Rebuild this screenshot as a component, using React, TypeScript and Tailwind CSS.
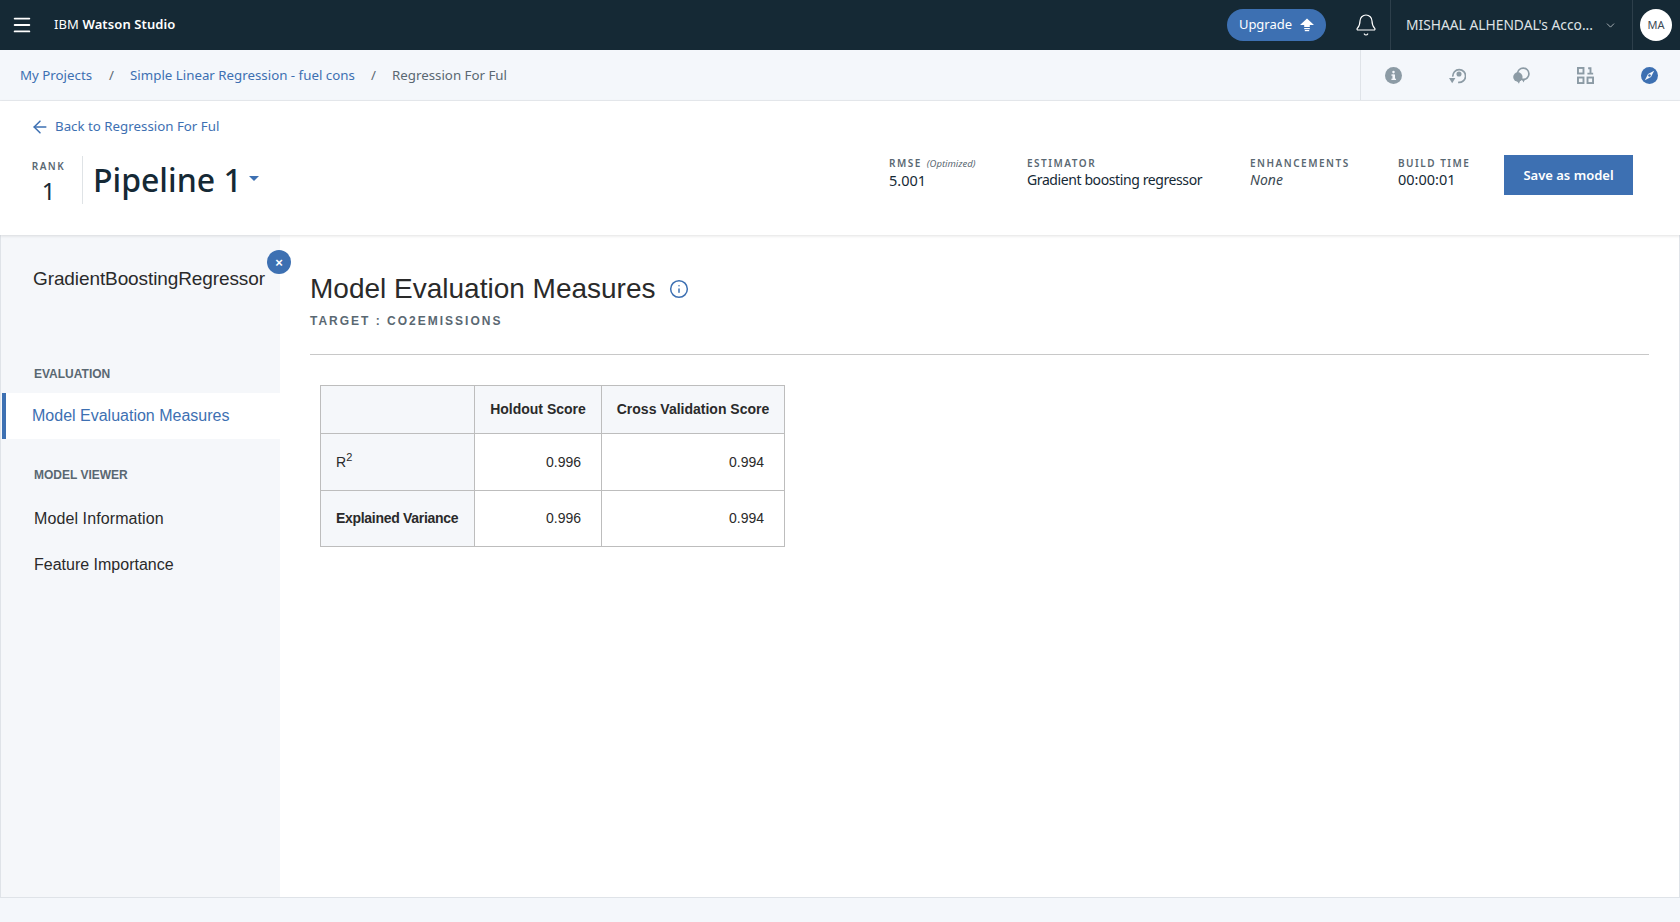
import { ArrowLeft, Bell, ChevronDown, Info, Menu } from "lucide-react";

const plex = "font-['Noto_Sans',sans-serif]";
const helv = "font-['Liberation_Sans',Arial,sans-serif]";

const labelCls = "text-[10px] leading-[14px] font-semibold tracking-[1.500px] text-[#5a6872]";

function ToolIcons() {
  return (
    <div className="flex h-full w-[320px] items-center justify-between border-l border-[#dfe3e8] pl-[24px] pr-[22px]">
      <svg width="17" height="17" viewBox="0 0 16 16">
        <circle cx="8" cy="8" r="8" fill="#8c9ba5" />
        <rect x="7" y="7" width="2.4" height="5" fill="#f4f7fb" />
        <rect x="6" y="7" width="2" height="1.2" fill="#f4f7fb" />
        <rect x="6" y="11" width="4.4" height="1.2" fill="#f4f7fb" />
        <circle cx="8" cy="4.8" r="1.2" fill="#f4f7fb" />
      </svg>
      <svg width="17" height="17" viewBox="0 0 16 16" fill="none">
        <path d="M3.600 9a6 6 0 1 1 5 5.400" stroke="#8c9ba5" strokeWidth="1.600" />
        <circle cx="9.400" cy="6.600" r="2.400" fill="#8c9ba5" />
        <path d="M0 10.400h6l-3 5z" fill="#8c9ba5" />
      </svg>
      <svg width="17" height="17" viewBox="0 0 16 16" fill="none">
        <circle cx="9.600" cy="6.400" r="5.400" stroke="#8c9ba5" strokeWidth="1.600" />
        <circle cx="4.600" cy="9.400" r="4.400" fill="#8c9ba5" />
        <path d="M3 12h4l-1.400 3.800zM8 11h3.400l-1.400 3.600z" fill="#8c9ba5" />
      </svg>
      <svg width="17" height="17" viewBox="0 0 16 16" fill="none" stroke="#8c9ba5" strokeWidth="1.800">
        <rect x="0.900" y="0.900" width="5.200" height="5.200" />
        <rect x="0.900" y="9.900" width="5.200" height="5.200" />
        <rect x="9.900" y="9.900" width="5.200" height="5.200" />
        <path d="M10.500 1.200h2.200v5M9.800 6.200h5.400" />
      </svg>
      <svg width="17" height="17" viewBox="0 0 16 16">
        <circle cx="8" cy="8" r="8" fill="#3d70b2" />
        <path d="M12.400 3.600 9.400 9.400 3.600 12.400 6.600 6.600z" fill="#f4f7fb" />
        <circle cx="8" cy="8" r="1.200" fill="#3d70b2" />
      </svg>
    </div>
  );
}

export default function App() {
  return (
    <div className={`flex h-[922px] w-[1680px] flex-col overflow-hidden bg-[#f4f7fb] ${plex}`}>
      <header className="flex h-[50px] shrink-0 items-center bg-[#152935] text-white">
        <Menu className="ml-[11px] h-[22px] w-[22px]" strokeWidth={2} />
        <div className="ml-[21px] text-[13px] tracking-[0.1px]">
          IBM <span className="font-semibold">Watson Studio</span>
        </div>
        <div className="ml-auto flex h-[32px] w-[99px] items-center justify-center gap-[8px] rounded-full bg-[#3d70b2] text-[13px]">
          Upgrade
          <svg width="14" height="14" viewBox="0 0 14 14" fill="#fff">
            <path d="M7 0.500 14 7H9.800V9H4.200V7H0z" />
            <rect x="4.200" y="10" width="5.600" height="1.200" />
            <rect x="4.800" y="12" width="4.400" height="1.200" />
          </svg>
        </div>
        <div className="flex w-[64px] justify-end pr-[12px]">
          <Bell className="h-[24px] w-[24px]" strokeWidth={1.200} />
        </div>
        <div className="flex h-full w-[242px] items-center border-l border-[#2d3f4b] pl-[15px] text-[13.800px] text-[#dfe3e6]">
          MISHAAL ALHENDAL's Acco...
          <ChevronDown className="ml-[11px] h-[13px] w-[13px]" strokeWidth={1.300} />
        </div>
        <div className="flex h-full w-[48px] items-center justify-center border-l border-[#2d3f4b] pr-[1px]">
          <div className="flex h-[32px] w-[32px] items-center justify-center rounded-full bg-white text-[11px] text-[#3d4a54]">
            MA
          </div>
        </div>
      </header>

      <nav className="flex h-[51px] shrink-0 items-center justify-between border-b border-[#e8ebef] text-[13.300px]">
        <div className="flex items-center pl-[20px] pt-[1px]">
          <span className="text-[#3d70b2]">My Projects</span>
          <span className="ml-[17px] mr-[16px] text-[#5a6872]">/</span>
          <span className="w-[225px] overflow-hidden whitespace-nowrap text-[#3d70b2]">
            Simple Linear Regression - fuel cons
          </span>
          <span className="mx-[16px] text-[#5a6872]">/</span>
          <span className="text-[#5a6872]">Regression For Ful</span>
        </div>
        <ToolIcons />
      </nav>

      <section className="relative z-10 flex h-[134px] shrink-0 bg-white pl-[32px] pr-[47px] shadow-[0_1px_3px_rgba(0,0,0,0.12)]">
        <div className="flex flex-col">
          <div className="-ml-[2px] mt-[16px] flex items-center gap-[5px] text-[13.300px] text-[#3d70b2]">
            <ArrowLeft className="h-[20px] w-[20px]" strokeWidth={1.800} />
            Back to Regression For Ful
          </div>
          <div className="mt-[19px] flex">
            <div className="flex w-[50px] flex-col items-center pr-[17px] pt-[3px]">
              <span className={labelCls}>RANK</span>
              <span className="mt-[4px] text-[24px] leading-[28px] text-[#152935]">1</span>
            </div>
            <div className="flex h-[48px] items-center border-l border-[#dfe3e6] pl-[10px]">
              <span className="text-[32px] font-medium text-[#152935]">Pipeline 1</span>
              <span className="mb-[3px] ml-[7px] h-0 w-0 border-x-[5px] border-t-[5px] border-x-transparent border-t-[#3d70b2]" />
            </div>
          </div>
        </div>
        <div className="ml-auto flex pt-[55px]">
          <div className="w-[138px] pl-[1px]">
            <div className="flex items-baseline gap-[5px]">
              <span className={labelCls}>RMSE</span>
              <span className="text-[9.500px] italic text-[#5a6872]">(Optimized)</span>
            </div>
            <div className="-mt-[1px] text-[14.500px] leading-[20px] text-[#152935]">5.001</div>
          </div>
          <div className="w-[223px] pl-[1px]">
            <div className={labelCls}>ESTIMATOR</div>
            <div className="text-[14px] leading-[20px] tracking-[-0.400px] text-[#152935]">
              Gradient boosting regressor
            </div>
          </div>
          <div className="w-[148px] pl-[1px]">
            <div className={labelCls}>ENHANCEMENTS</div>
            <div className="text-[14px] italic leading-[20px] text-[#3d4a54]">None</div>
          </div>
          <div className="w-[107px] pl-[1px]">
            <div className={labelCls}>BUILD TIME</div>
            <div className="-mt-[1px] text-[14.500px] leading-[20px] text-[#152935]">00:00:01</div>
          </div>
          <div className="-mt-[1px] flex h-[40px] w-[129px] items-center justify-center bg-[#3d70b2] pt-[1px] text-[13px] font-semibold text-white">
            Save as model
          </div>
        </div>
      </section>

      <div className={`flex h-[663px] shrink-0 border-b border-[#dfe3e8] bg-white ${helv}`}>
        <aside className="relative w-[280px] shrink-0 border-l border-[#dfe3e8] bg-[#f5f7fa] pt-[33px]">
          <div className="pl-[32px] text-[19px] leading-[22px] tracking-[-0.100px] text-[#2a2a2a]">GradientBoostingRegressor</div>
          <div className="absolute left-[266px] top-[15px] flex h-[24px] w-[24px] items-center justify-center rounded-full bg-[#3d70b2] text-[13px] font-bold leading-none text-white">
            ×
          </div>
          <div className="mt-[75px] pl-[33px] text-[12px] font-bold text-[#5a6872]">EVALUATION</div>
          <div className="ml-[1px] mt-[10px] flex h-[46px] items-center border-l-[4px] border-[#3d70b2] bg-white pl-[26px] text-[16px] text-[#3d70b2]">
            Model Evaluation Measures
          </div>
          <div className="mt-[27px] pl-[33px] text-[12px] font-bold text-[#5a6872]">MODEL VIEWER</div>
          <div className="mt-[24px] pl-[33px] text-[16px] leading-[22px] tracking-[0.100px] text-[#2a2a2a]">Model Information</div>
          <div className="mt-[24px] pl-[33px] text-[16px] leading-[22px] text-[#2a2a2a]">Feature Importance</div>
        </aside>
        <main className="flex-1 border-r border-[#dfe3e8] pl-[30px] pr-[30px] pt-[36px]">
          <div className="flex items-center">
            <h1 className="text-[28px] leading-[36px] text-[#2a2a2a]">Model Evaluation Measures</h1>
            <Info className="ml-[13px] h-[20px] w-[20px] text-[#3d70b2]" strokeWidth={1.800} />
          </div>
          <div className="mt-[5px] text-[12px] font-bold tracking-[2px] text-[#5a6872]">TARGET : CO2EMISSIONS</div>
          <div className="mt-[24px] border-t border-[#c8c8c8]" />
          <table className="ml-[10px] mt-[30px] border-collapse text-[14px] text-[#2a2a2a]">
            <tbody>
              <tr className="h-[48px] bg-[#f5f7fa] font-bold">
                <td className="w-[154px] border border-[#bdbdbd]" />
                <td className="w-[127px] border border-[#bdbdbd] text-center">Holdout Score</td>
                <td className="w-[183px] border border-[#bdbdbd] text-center">Cross Validation Score</td>
              </tr>
              <tr className="h-[57px]">
                <td className="border border-[#bdbdbd] bg-[#f5f7fa] pl-[15px]">
                  R<sup className="text-[11px]">2</sup>
                </td>
                <td className="border border-[#bdbdbd] pr-[20px] text-right">0.996</td>
                <td className="border border-[#bdbdbd] pr-[20px] text-right">0.994</td>
              </tr>
              <tr className="h-[56px]">
                <td className="border border-[#bdbdbd] bg-[#f5f7fa] pl-[15px] font-bold tracking-[-0.300px]">Explained Variance</td>
                <td className="border border-[#bdbdbd] pr-[20px] text-right">0.996</td>
                <td className="border border-[#bdbdbd] pr-[20px] text-right">0.994</td>
              </tr>
            </tbody>
          </table>
        </main>
      </div>
    </div>
  );
}
